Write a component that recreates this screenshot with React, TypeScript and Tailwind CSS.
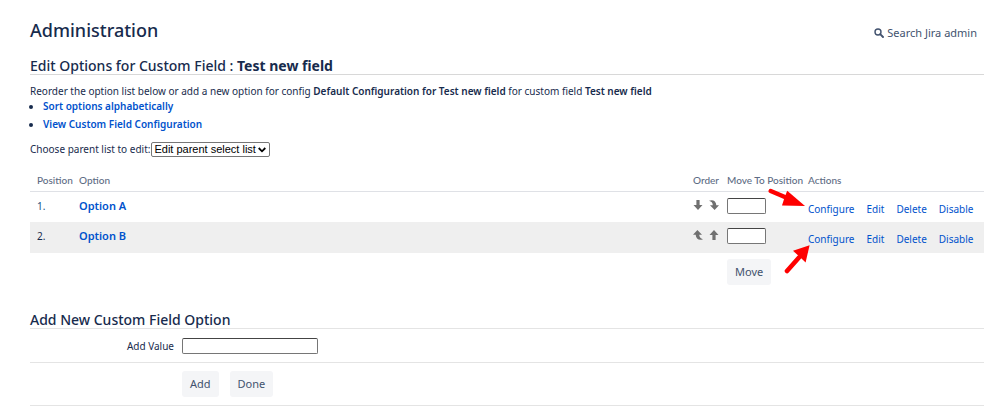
import { useState } from "react";

type Option = {
  id: number;
  name: string;
  visited: boolean;
};

const options: Option[] = [
  { id: 1, name: "Option A", visited: false },
  { id: 2, name: "Option B", visited: true },
];

const actions = ["Configure", "Edit", "Delete", "Disable"];

const SearchIcon = () => (
  <svg viewBox="0 0 10 10" className="h-[10px] w-[10px]" fill="none" stroke="#42526e" aria-hidden="true">
    <circle cx="4" cy="4" r="3" strokeWidth="1.4" />
    <path d="M6.2 6.2 9 9" strokeWidth="1.9" strokeLinecap="round" />
  </svg>
);

const StraightArrow = ({ up = false }: { up?: boolean }) => (
  <svg viewBox="0 0 10 10" className="h-[10px] w-[10px]" fill="#707070" aria-hidden="true">
    {up ? (
      <path d="M5 0 9.5 5H6.6V10H3.4V5H.5Z" />
    ) : (
      <path d="M5 10 .5 5H3.4V0H6.6V5H9.5Z" />
    )}
  </svg>
);

const CurvedArrow = ({ up = false }: { up?: boolean }) => (
  <svg viewBox="0 0 10 10" className="h-[10px] w-[10px]" fill="#707070" aria-hidden="true">
    {up ? (
      <path d="M4.4 0 9 4.8H6.2C6.4 7 7.4 8.6 10 9.2 6.4 10.9 2.8 9 2.7 4.8H0Z" />
    ) : (
      <path d="M5.6 10 1 5.2H3.8C3.6 3 2.6 1.4 0 .8 3.6-.9 7.2 1 7.3 5.2H10Z" />
    )}
  </svg>
);

const OrderButtons = ({ first }: { first: boolean }) => (
  <div className="flex gap-[6px]">
    {first ? (
      <>
        <button title="Move down"><StraightArrow /></button>
        <button title="Move to last"><CurvedArrow /></button>
      </>
    ) : (
      <>
        <button title="Move to first"><CurvedArrow up /></button>
        <button title="Move up"><StraightArrow up /></button>
      </>
    )}
  </div>
);

// Red markers that point at the Configure links
const RedArrow = ({ first }: { first: boolean }) =>
  first ? (
    <svg viewBox="0 0 38 20" className="pointer-events-none absolute -top-1 -left-[33px] h-5 w-[38px]" aria-hidden="true">
      <path d="M2.7 3 18 9.6" stroke="#fe0000" strokeWidth="4.4" strokeLinecap="round" />
      <path d="M37 18 14 17.6 16.2 10.5 19.2 2.8Z" fill="#fe0000" />
    </svg>
  ) : (
    <svg viewBox="0 0 26 31" className="pointer-events-none absolute top-[21px] -left-[17px] h-[31px] w-[26px]" aria-hidden="true">
      <path d="M3 28 15 14.5" stroke="#fe0000" strokeWidth="4.6" strokeLinecap="round" />
      <path d="M25.6 2.2 21.6 19.4 15.4 13.6 9 7.8Z" fill="#fe0000" />
    </svg>
  );

const buttonClass = "h-[26px] rounded-[3px] bg-[#f4f5f7] px-2 text-[11px] leading-4 text-[#42526e]";
const inputClass = "block border border-[#767676] border-t-[#444] rounded-[2px] bg-white px-1 text-[10px] text-black";

const App: React.FC = () => {
  const [newValue, setNewValue] = useState("");

  return (
    <main className="bg-white pl-[30px] pr-[14px] pt-[18px] font-['Noto_Sans',sans-serif] text-[10px] leading-4 text-[#172b4d]">
      <header className="flex items-center justify-between pr-[7px]">
        <h1 className="text-[18px] leading-6 font-medium">Administration</h1>
        <button className="mt-[6px] flex items-center gap-[3px] text-[11px] leading-4 text-[#42526e]">
          <SearchIcon />
          Search Jira admin
        </button>
      </header>

      <h2 className="mt-4 border-b border-[#d8d8d8] text-[14px] leading-4 font-medium">
        Edit Options for Custom Field : <strong className="font-bold">Test new field</strong>
      </h2>

      <p className="mt-2">
        Reorder the option list below or add a new option for config{" "}
        <strong className="font-semibold">Default Configuration for Test new field</strong> for custom field{" "}
        <strong className="font-semibold">Test new field</strong>
      </p>
      <ul className="-mt-[2px] list-disc pl-[13px] font-semibold leading-[18px]">
        <li>
          <a href="#sort" className="text-[#0052cc]">Sort options alphabetically</a>
        </li>
        <li>
          <a href="#configuration" className="text-[#0052cc]">View Custom Field Configuration</a>
        </li>
      </ul>

      <div className="mt-2 flex items-center gap-px">
        <label htmlFor="parent-list">Choose parent list to edit:</label>
        <div className="relative">
          <select
            id="parent-list"
            className="block h-[15px] w-[119px] appearance-none rounded-[2px] border border-[#767676] bg-white pl-[2px] font-['Liberation_Sans',sans-serif] text-[11px] leading-3 text-black"
          >
            <option>Edit parent select list</option>
          </select>
          <svg
            viewBox="0 0 8 6"
            className="pointer-events-none absolute top-[5px] right-1 h-[6px] w-2"
            fill="none"
            stroke="#000"
            strokeWidth="1.8"
            aria-hidden="true"
          >
            <path d="M.7 1 4 4.3 7.3 1" />
          </svg>
        </div>
      </div>

      <table className="mt-3 w-full table-fixed text-left">
        <colgroup>
          <col className="w-[42px]" />
          <col />
          <col className="w-[34px]" />
          <col className="w-[81px]" />
          <col className="w-[183px]" />
        </colgroup>
        <thead>
          <tr className="h-[22px] border-b border-[#dfe1e6] font-['Lato','Noto_Sans',sans-serif] whitespace-nowrap text-[#5e6c84]">
            <th className="pl-[7px] font-medium">Position</th>
            <th className="pl-[7px] font-medium">Option</th>
            <th className="pl-[7px] font-medium">Order</th>
            <th className="pl-[7px] font-medium">Move To Position</th>
            <th className="pl-[7px] font-medium">Actions</th>
          </tr>
        </thead>
        <tbody>
          {options.map((option, index) => (
            <tr key={option.id} className="h-[31px] align-top even:bg-[#efefef]">
              <td className={option.visited ? "pl-[7px] pt-[6px]" : "pl-[7px] pt-[6px] text-[#205081]"}>{option.id}.</td>
              <td className="pl-[7px] pt-[6px]">
                <a href="#option" className="text-[11px] font-semibold text-[#0052cc]">{option.name}</a>
              </td>
              <td className="pl-[7px] pt-2">
                <OrderButtons first={index === 0} />
              </td>
              <td className="pl-[7px] pt-[6px]">
                <input aria-label={`New position for ${option.name}`} className={`${inputClass} h-4 w-[39px]`} />
              </td>
              <td className="relative pl-[7px] pt-[9px]">
                <RedArrow first={index === 0} />
                <div className="flex gap-3">
                  {actions.map((action) => (
                    <a key={action} href="#action" className="text-[#0052cc]">{action}</a>
                  ))}
                </div>
              </td>
            </tr>
          ))}
          <tr>
            <td colSpan={3} />
            <td colSpan={2} className="pl-[7px] pt-[6px]">
              <button className={buttonClass}>Move</button>
            </td>
          </tr>
        </tbody>
      </table>

      <form onSubmit={(e) => e.preventDefault()}>
        <h2 className="mt-[27px] border-b border-[#e4e4e4] text-[14px] leading-4 font-medium">Add New Custom Field Option</h2>
        <div className="flex items-center gap-2 border-b border-[#e4e4e4] pt-[9px] pb-2">
          <label htmlFor="add-value" className="w-36 text-right">Add Value</label>
          <input
            id="add-value"
            value={newValue}
            onChange={(e) => setNewValue(e.target.value)}
            className={`${inputClass} h-4 w-[136px]`}
          />
        </div>
        <div className="flex gap-[11px] border-b border-[#e4e4e4] py-2 pl-[152px]">
          <button className={buttonClass}>Add</button>
          <button type="button" className={buttonClass}>Done</button>
        </div>
      </form>
    </main>
  );
};

export default App;
